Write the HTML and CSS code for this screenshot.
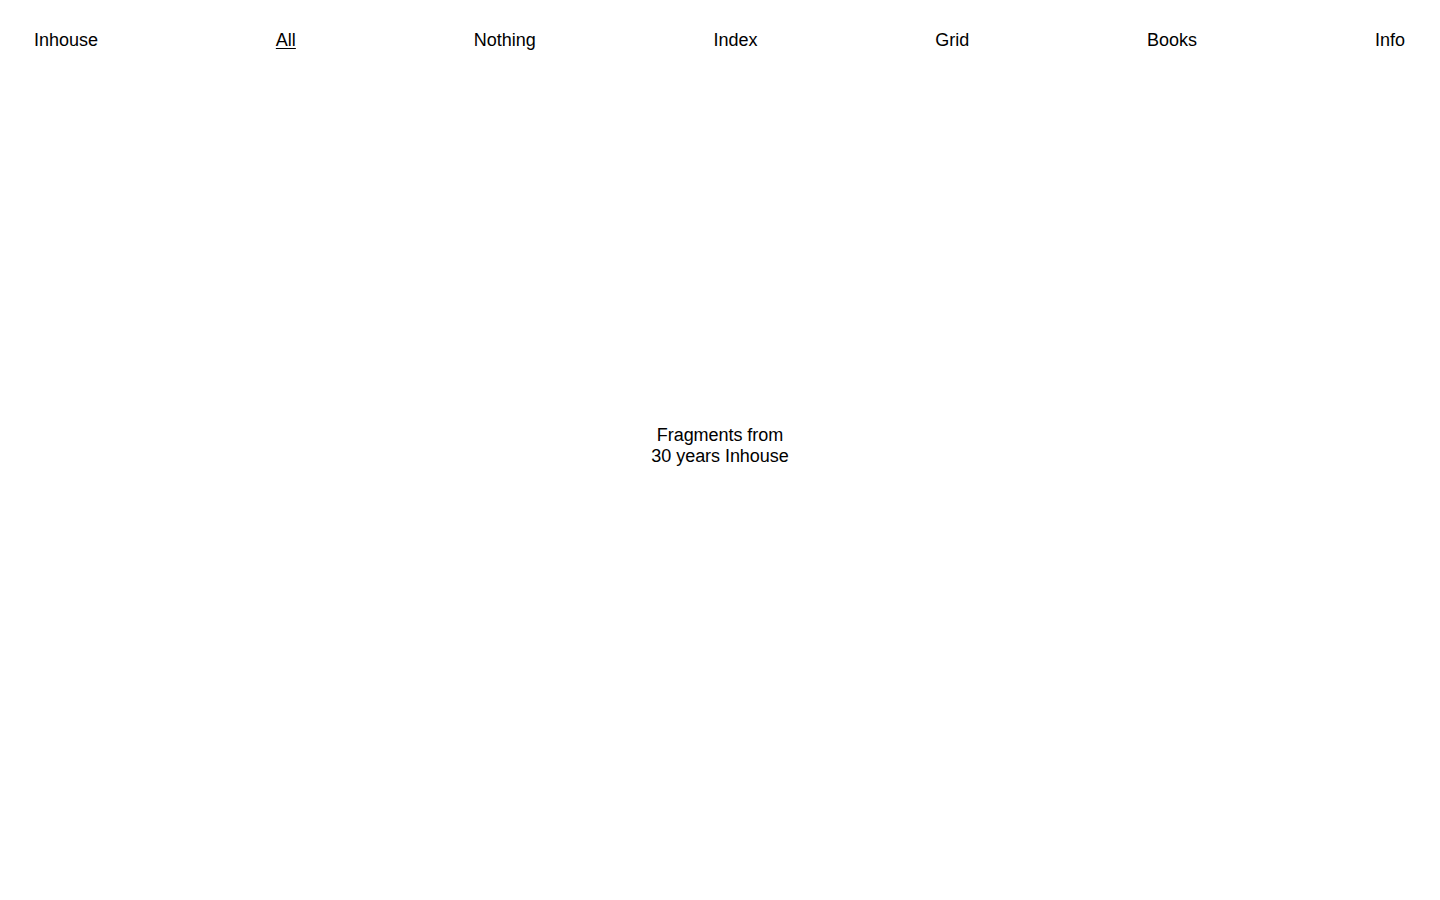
FILE: index.html
```html
<!DOCTYPE html>
<html lang="en">
<head>
<meta charset="utf-8">
<title>Inhouse</title>
<link rel="stylesheet" href="styles.css">
</head>
<body>
<div class="page">
  <header class="nav">
    <a class="nav-link" href="#">Inhouse</a>
    <a class="nav-link active" href="#">All</a>
    <a class="nav-link" href="#">Nothing</a>
    <a class="nav-link" href="#">Index</a>
    <a class="nav-link" href="#">Grid</a>
    <a class="nav-link" href="#">Books</a>
    <a class="nav-link" href="#">Info</a>
  </header>
  <main class="hero">
    <p class="tagline">Fragments from<br>30 years Inhouse</p>
  </main>
</div>
</body>
</html>
```

FILE: styles.css
```css
* { box-sizing: border-box; }
html, body {
  margin: 0;
  padding: 0;
  background: #fff;
  color: #000;
  font-family: "Liberation Sans", Arial, sans-serif;
  font-size: 18px;
  line-height: 21px;
}
.page {
  height: 100vh;
  display: flex;
  flex-direction: column;
}
.nav {
  display: flex;
  justify-content: space-between;
  padding: 30px 35px 28px 34px;
}
.nav-link {
  color: #000;
  text-decoration: none;
}
.nav-link.active {
  text-decoration: underline;
  text-decoration-thickness: 1px;
  text-underline-offset: 2px;
}
.hero {
  flex: 1;
  display: flex;
  align-items: center;
  justify-content: center;
  padding-bottom: 87px;
}
.tagline {
  margin: 0;
  text-align: center;
  letter-spacing: -0.05px;
}
```
